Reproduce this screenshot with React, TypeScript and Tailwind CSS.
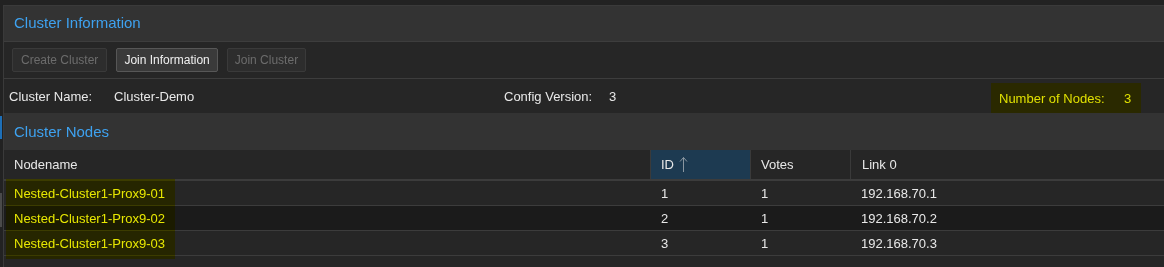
import React from "react";

const nodes = [
    { name: "Nested-Cluster1-Prox9-01", id: 1, votes: 1, link: "192.168.70.1" },
    { name: "Nested-Cluster1-Prox9-02", id: 2, votes: 1, link: "192.168.70.2" },
    { name: "Nested-Cluster1-Prox9-03", id: 3, votes: 1, link: "192.168.70.3" },
];

const SortUp: React.FC = () => (
    <svg width="9" height="17" viewBox="0 0 9 17" className="ml-[5px]">
        <path d="M4.5 16V1.5M1 5.5L4.5 1.5L8 5.5" stroke="#8a96a0" strokeWidth="1" fill="none" />
    </svg>
);

const App: React.FC = () => {
    return (
        <div className="w-[1164px] h-[267px] bg-[#222222] flex overflow-hidden font-['Liberation_Sans',Arial,sans-serif] text-[13px] text-[#e8e8e8]">
            {/* left tab strip */}
            <div className="w-[3px] shrink-0 flex flex-col">
                <div className="h-[116px]" />
                <div className="w-[2px] h-[23px] bg-[#1d6fb8]" />
                <div className="h-[54px]" />
                <div className="w-[2px] h-[34px] bg-[#4a4a4a]" />
            </div>

            <div className="flex-1 mt-[5px] border-l border-t border-[#3a3a3a] bg-[#262626] flex flex-col">
                {/* Cluster Information */}
                <div className="h-[36px] bg-[#333333] border-b border-[#3d3d3d] flex items-center pl-[10px] text-[15px] text-[#3ea2f0]">
                    Cluster Information
                </div>
                <div className="h-[37px] border-b border-[#3d3d3d] flex items-center pl-[8px] gap-[9px] text-[12px]">
                    <div className="h-[24px] px-[8px] flex items-center rounded-[2px] border border-[#3a3a3a] bg-[#2d2d2d] text-[#6c6c6c]">Create Cluster</div>
                    <div className="h-[24px] px-[7px] flex items-center rounded-[2px] border border-[#575757] bg-[#3a3a3a] text-[#f0f0f0]">Join Information</div>
                    <div className="h-[24px] px-[7px] flex items-center rounded-[2px] border border-[#3a3a3a] bg-[#2d2d2d] text-[#6c6c6c]">Join Cluster</div>
                </div>
                <div className="h-[34px] flex items-stretch pl-[5px]">
                    <div className="w-[495px] flex items-center pt-[1px]">
                        <span className="w-[105px]">Cluster Name:</span>
                        <span>Cluster-Demo</span>
                    </div>
                    <div className="w-[487px] flex items-center pt-[1px]">
                        <span className="w-[105px]">Config Version:</span>
                        <span>3</span>
                    </div>
                    <div className="mt-[4px] w-[150px] bg-[#2a2900] text-[#e0e000] flex items-center pl-[8px] pt-[1px]">
                        <span className="w-[125px]">Number of Nodes:</span>
                        <span>3</span>
                    </div>
                </div>

                {/* Cluster Nodes */}
                <div className="h-[37px] bg-[#333333] flex items-center pl-[10px] pt-[1px] text-[15px] text-[#3ea2f0]">
                    Cluster Nodes
                </div>
                <div className="relative">
                    <div className="grid grid-cols-[646px_100px_100px_1fr] h-[31px] border-b-2 border-[#3c3c3c]">
                        <div className="flex items-center pl-[10px]">Nodename</div>
                        <div className="flex items-center pl-[10px] border-l border-[#3a3a3a] bg-[#1d3a51]">
                            ID
                            <SortUp />
                        </div>
                        <div className="flex items-center pl-[10px] border-l border-[#3a3a3a]">Votes</div>
                        <div className="flex items-center pl-[11px] border-l border-[#3a3a3a]">Link 0</div>
                    </div>
                    {nodes.map((n, i) => (
                        <div
                            key={n.id}
                            className={`grid grid-cols-[646px_100px_100px_1fr] h-[25px] border-b border-[#3c3c3c] ${i === 1 ? "bg-[#1b1b1b]" : "bg-[#262626]"}`}
                        >
                            <div className="flex items-center pl-[10px] pt-[1px]">{n.name}</div>
                            <div className="flex items-center pl-[11px] pt-[1px]">{n.id}</div>
                            <div className="flex items-center pl-[11px] pt-[1px]">{n.votes}</div>
                            <div className="flex items-center pl-[11px] pt-[1px]">{n.link}</div>
                        </div>
                    ))}
                    {/* highlighter mark over node names */}
                    <div className="absolute left-[2px] top-[29px] w-[169px] h-[80px] bg-[#ffff00] mix-blend-multiply pointer-events-none" />
                </div>
            </div>
        </div>
    );
};

export default App;
